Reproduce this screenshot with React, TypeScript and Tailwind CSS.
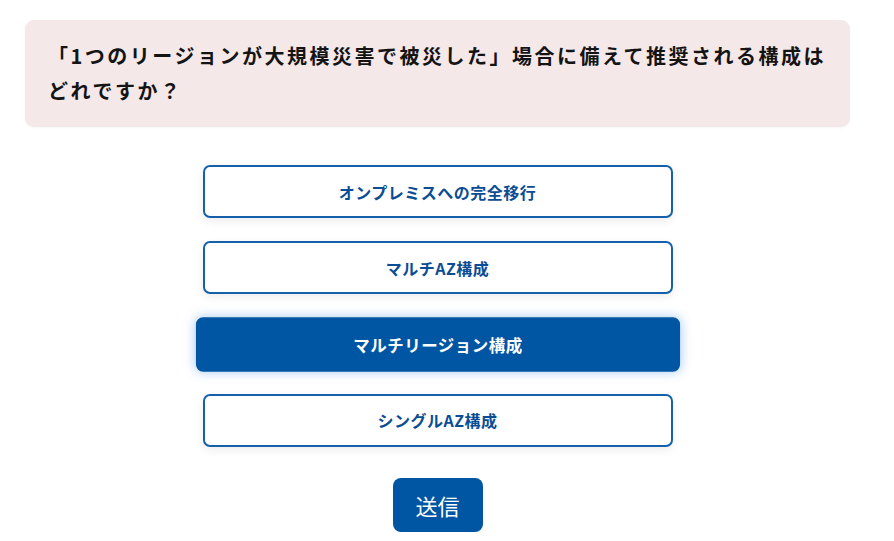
import React from "react";

const options = [
  { label: "オンプレミスへの完全移行", selected: false },
  { label: "マルチAZ構成", selected: false },
  { label: "マルチリージョン構成", selected: true },
  { label: "シングルAZ構成", selected: false },
];

export default function App() {
  return (
    <div
      className="w-[875px] bg-white px-[25px] pt-[20px] pb-[9px]"
      style={{ fontFamily: '"Noto Sans CJK JP", "Noto Sans", sans-serif' }}
    >
      <div className="rounded-[9px] bg-[#f4e8e8] px-[23px] pt-[18px] pb-[19px] shadow-[0_1px_3px_rgba(0,0,0,0.04)]">
        <p className="text-[20px] font-bold leading-[35px] tracking-[2.5px] text-[#141414]">
          「1つのリージョンが大規模災害で被災した」場合に備えて推奨される構成はどれですか？
        </p>
      </div>
      <div className="mt-[38px] flex flex-col items-center gap-[23.3px]">
        {options.map((o) =>
          o.selected ? (
            <button
              key={o.label}
              className="flex h-[53px] w-[470px] scale-[1.03] items-center justify-center rounded-[7px] border-2 border-[#0056a3] bg-[#0056a3] text-[16px] font-bold tracking-[0.5px] text-white shadow-[0_0_10px_rgba(0,110,230,0.35)]"
            >
              {o.label}
            </button>
          ) : (
            <button
              key={o.label}
              className="flex h-[53px] w-[470px] items-center justify-center rounded-[7px] border-2 border-[#1460ab] bg-white text-[16px] font-bold tracking-[0.5px] text-[#0b4d94] shadow-[0_3px_10px_rgba(0,0,0,0.08)]"
            >
              {o.label}
            </button>
          )
        )}
        <button className="mt-[8px] flex h-[54px] w-[90px] items-center justify-center rounded-[8px] bg-[#0056a3] text-[22px] font-normal text-white">
          送信
        </button>
      </div>
    </div>
  );
}
